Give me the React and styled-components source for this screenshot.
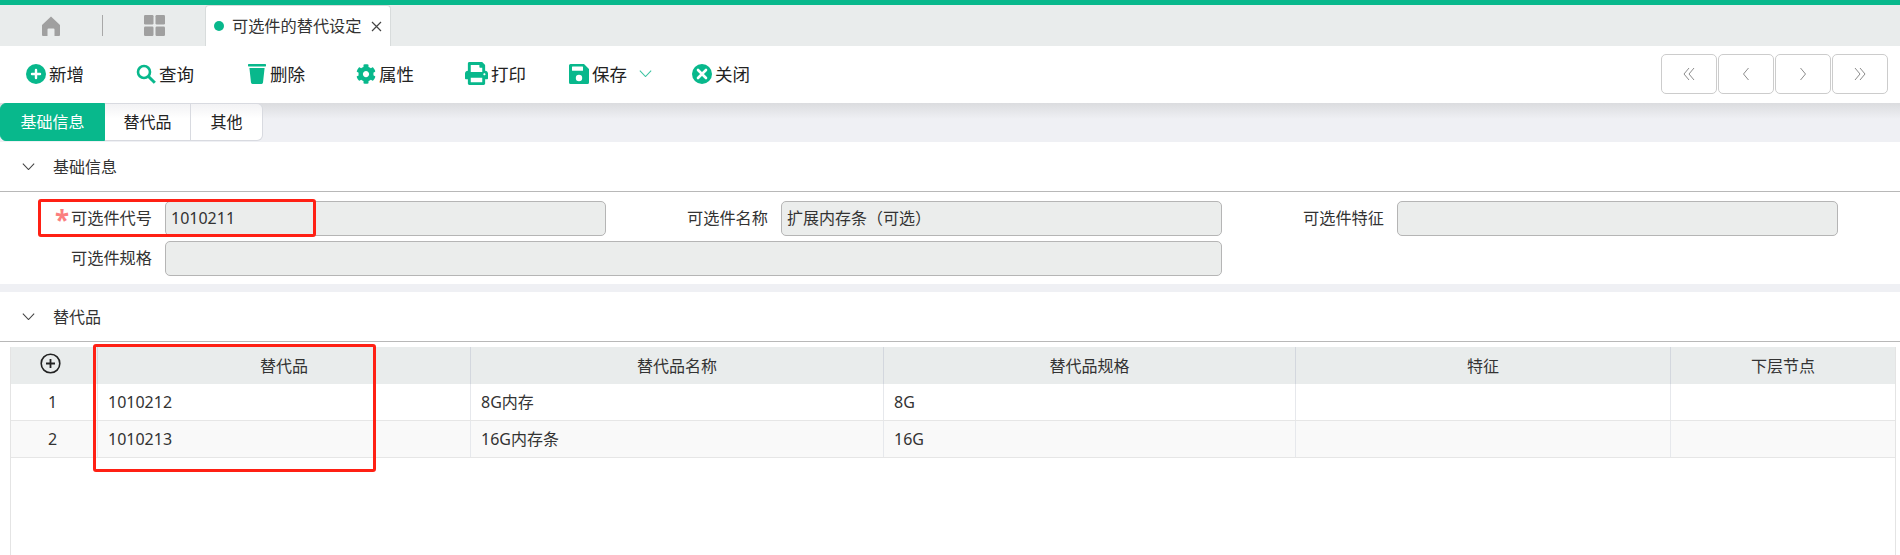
import React from 'react';
import styled, { createGlobalStyle } from 'styled-components';
import { FaCog, FaPrint } from 'react-icons/fa';

const GlobalStyle = createGlobalStyle`
  html, body {
    margin: 0;
    padding: 0;
    height: 100%;
    overflow: hidden;
    background: #fff;
  }
  * {
    box-sizing: border-box;
  }
`;

const green = '#08b88c';

const Page = styled.div`
  position: relative;
  width: 1900px;
  height: 555px;
  overflow: hidden;
  background: #fff;
  color: #222;
  font-family: "Noto Sans", "Noto Sans CJK SC", sans-serif;
  font-size: 16px;
  line-height: 22px;
  border-top: 5px solid ${green};
`;

const TabBar = styled.div`
  display: flex;
  height: 41px;
  background: #e9ecec;
`;

const TabIcon = styled.div`
  width: 102px;
  display: flex;
  align-items: center;
  justify-content: center;
  color: #a0a0a0;
`;

const TabDivider = styled.div`
  width: 1px;
  height: 21px;
  margin-top: 10px;
  background: #a8a8a8;
`;

const ActiveTab = styled.div`
  display: flex;
  align-items: center;
  width: 186px;
  height: 41px;
  padding-left: 8px;
  background: #fff;
  border: 1px solid #d8dcdc;
  border-bottom: none;
  border-radius: 4px 4px 0 0;
  color: #333;
  font-size: 16.2px;
`;

const TabDot = styled.span`
  width: 10px;
  height: 10px;
  border-radius: 50%;
  background: ${green};
  margin-right: 8px;
`;

const TabClose = styled.span`
  display: flex;
  margin-left: 9px;
  color: #444;
`;

const Toolbar = styled.div`
  display: flex;
  align-items: center;
  height: 57px;
  padding: 0 0 2px 26px;
  background: #fff;
`;

const ToolButton = styled.div`
  display: flex;
  align-items: center;
  width: ${(p) => p.$width}px;
  font-size: 17.5px;
  color: #222;
  svg {
    color: ${green};
  }
`;

const ToolIcon = styled.span`
  display: flex;
  justify-content: center;
  width: ${(p) => p.$width || 20}px;
  margin-right: 3px;
`;

const MenuArrow = styled.span`
  display: flex;
  margin-left: 12px;
`;

const Pager = styled.div`
  display: flex;
  gap: 1px;
  margin-left: auto;
  margin-right: 12px;
`;

const PagerButton = styled.div`
  display: flex;
  align-items: center;
  justify-content: center;
  width: 56px;
  height: 40px;
  border: 1px solid #ccc;
  border-radius: 5px;
  color: #8c8c8c;
`;

const SubTabStrip = styled.div`
  display: flex;
  height: 39px;
  background: linear-gradient(#dbdcdf 0, #eff0f4 16px, #eff0f4 100%);
`;

const SubTab = styled.div`
  display: flex;
  align-items: center;
  justify-content: center;
  width: ${(p) => p.$width}px;
  height: 38px;
  background: ${(p) => (p.$active ? green : 'linear-gradient(#f2f2f4, #fff 40%)')};
  color: ${(p) => (p.$active ? '#fff' : '#222')};
  border: 1px solid ${(p) => (p.$active ? green : '#d8dae0')};
  border-left: ${(p) => (p.$active ? undefined : 'none')};
  border-radius: ${(p) => p.$radius};
`;

const SectionHeader = styled.div`
  display: flex;
  align-items: center;
  height: 50px;
  padding-left: 22px;
  border-bottom: 1px solid #b8b8b8;
  color: #333;
`;

const SectionTitle = styled.span`
  margin-left: 18px;
`;

const FormGrid = styled.div`
  display: grid;
  grid-template-columns: repeat(3, 616px);
  row-gap: 5px;
  padding-top: 9px;
  padding-bottom: 8px;
`;

const Field = styled.div`
  display: grid;
  grid-template-columns: 152px 1fr;
  grid-column: span ${(p) => p.$span || 1};
  column-gap: 13px;
  align-items: center;
  padding-right: 10px;
`;

const FieldLabel = styled.label`
  display: flex;
  align-items: center;
  justify-content: flex-end;
  padding-bottom: 1px;
  color: #333;
  font-size: 16.2px;
`;

const Required = styled.span`
  color: #fb7f7f;
  font-size: 26px;
  font-weight: 700;
  line-height: 20px;
  height: 20px;
  margin: 4px 2px 0 0;
`;

const ValueBox = styled.div`
  height: 35px;
  line-height: 32px;
  padding-left: 5px;
  background: #ebedec;
  border: 1px solid #b5b5b5;
  border-radius: 5px;
  color: #333;
`;

const Band = styled.div`
  height: 8px;
  background: #eff0f4;
`;

const TableWrap = styled.div`
  margin: 5px 4px 0 10px;
  height: 220px;
  border-left: 1px solid #e4e4e4;
  border-right: 1px solid #e4e4e4;
`;

const columns = '87px 373px 413px 412px 375px 224px';

const Row = styled.div`
  display: grid;
  grid-template-columns: ${columns};
  height: 37px;
  background: ${(p) => (p.$header ? '#e9ecec' : p.$striped ? '#f9f9f9' : '#fff')};
  border-bottom: ${(p) => (p.$header ? 'none' : '1px solid #e6e6e6')};
`;

const HeadCell = styled.div`
  display: flex;
  align-items: center;
  justify-content: center;
  border-right: 1px solid #d3d7de;
  color: #333;
  &:last-child {
    border-right: none;
  }
`;

const AddRow = styled.span`
  display: flex;
  margin: 0 7px 5px 0;
`;

const Cell = styled.div`
  display: flex;
  align-items: center;
  justify-content: ${(p) => (p.$center ? 'center' : 'flex-start')};
  padding: ${(p) => (p.$center ? '0 3px 0 0' : '0 0 0 10px')};
  border-right: 1px solid #e6e8ec;
  color: #333;
  &:last-child {
    border-right: none;
  }
`;

const Callout = styled.div`
  position: absolute;
  border: 3px solid #ff2014;
  border-radius: 3px;
  pointer-events: none;
`;

const CodeCallout = styled(Callout)`
  left: 38px;
  top: 194px;
  width: 278px;
  height: 38px;
`;

const ColumnCallout = styled(Callout)`
  left: 93px;
  top: 339px;
  width: 283px;
  height: 128px;
`;

const HomeIcon = () => (
  <svg width="20" height="20" viewBox="0 0 20 20" fill="currentColor">
    <path d="M10 .5 19 9v10a1 1 0 0 1-1 1h-4.5v-6.5a1 1 0 0 0-1-1h-5a1 1 0 0 0-1 1V20H2a1 1 0 0 1-1-1V9z" />
  </svg>
);

const GridIcon = () => (
  <svg width="21" height="21" viewBox="0 0 21 21" fill="currentColor">
    <rect x="0" y="0" width="9.5" height="9.5" rx="1.2" />
    <rect x="11.5" y="0" width="9.5" height="9.5" rx="1.2" />
    <rect x="0" y="11.5" width="9.5" height="9.5" rx="1.2" />
    <rect x="11.5" y="11.5" width="9.5" height="9.5" rx="1.2" />
  </svg>
);

const CloseGlyph = () => (
  <svg width="11" height="11" viewBox="0 0 11 11" stroke="currentColor" strokeWidth="1.2" fill="none">
    <path d="M1 1l9 9M10 1l-9 9" />
  </svg>
);

const PlusCircle = () => (
  <svg width="20" height="20" viewBox="0 0 20 20">
    <circle cx="10" cy="10" r="10" fill="currentColor" />
    <path d="M10 6v8M6 10h8" stroke="#fff" strokeWidth="2.4" strokeLinecap="round" />
  </svg>
);

const SearchIcon = () => (
  <svg width="20" height="20" viewBox="0 0 20 20" fill="none" stroke="currentColor">
    <circle cx="8" cy="8" r="6" strokeWidth="2.6" />
    <path d="M12.5 12.5l6.3 6.3" strokeWidth="3" />
  </svg>
);

const TrashIcon = () => (
  <svg width="18" height="20" viewBox="0 0 18 20" fill="currentColor">
    <rect x="0" y="0" width="18" height="2.4" rx="0.6" />
    <path d="M1.4 4h15.2l-1.6 14.6a1.5 1.5 0 0 1-1.5 1.4H4.5A1.5 1.5 0 0 1 3 18.6z" />
  </svg>
);

const SaveIcon = () => (
  <svg width="20" height="20" viewBox="0 0 20 20" fill="currentColor">
    <path d="M1.5 0H15l5 5v13.5a1.5 1.5 0 0 1-1.5 1.5h-17A1.5 1.5 0 0 1 0 18.5v-17A1.5 1.5 0 0 1 1.5 0z" />
    <rect x="3" y="2.5" width="11" height="4.2" rx="0.5" fill="#fff" />
    <circle cx="10" cy="14" r="3.2" fill="#fff" />
  </svg>
);

const CloseCircle = () => (
  <svg width="20" height="20" viewBox="0 0 20 20">
    <circle cx="10" cy="10" r="10" fill="currentColor" />
    <path d="M6 6l8 8M14 6l-8 8" stroke="#fff" strokeWidth="2.6" strokeLinecap="round" />
  </svg>
);

const Chevron = ({ size = 13, color = 'currentColor' }) => (
  <svg width={size} height={size * 0.6} viewBox="0 0 13 8" fill="none" stroke={color} strokeWidth="1.1" style={{ color }}>
    <path d="M.7.7l5.8 6 5.8-6" />
  </svg>
);

const PagerArrow = ({ d }) => (
  <svg width="12" height="14" viewBox="0 0 12 14" fill="none" stroke="currentColor" strokeWidth="1">
    <path d={d} />
  </svg>
);

const AddRowIcon = () => (
  <svg width="21" height="21" viewBox="0 0 21 21" fill="none" stroke="#222">
    <circle cx="10.5" cy="10.5" r="9.3" strokeWidth="1.6" />
    <path d="M10.5 6v9M6 10.5h9" strokeWidth="1.8" />
  </svg>
);

const tools = [
  { label: '新增', width: 110, icon: <PlusCircle /> },
  { label: '查询', width: 111, icon: <SearchIcon /> },
  { label: '删除', width: 109, icon: <TrashIcon /> },
  { label: '属性', width: 108, icon: <FaCog size={20} /> },
  { label: '打印', width: 105, iconWidth: 24, icon: <FaPrint size={23} /> },
  { label: '保存', width: 123, icon: <SaveIcon />, menu: true },
  { label: '关闭', width: 70, icon: <CloseCircle /> },
];

const pagerArrows = [
  'M6 1 1 7l5 6M11 1 6 7l5 6',
  'M8.5 1l-5 6 5 6',
  'M3.5 1l5 6-5 6',
  'M1 1l5 6-5 6M6 1l5 6-5 6',
];

const rows = [
  ['1', '1010212', '8G内存', '8G', '', ''],
  ['2', '1010213', '16G内存条', '16G', '', ''],
];

const App = () => {
  return (
    <Page>
      <GlobalStyle />
      <TabBar>
        <TabIcon>
          <HomeIcon />
        </TabIcon>
        <TabDivider />
        <TabIcon>
          <GridIcon />
        </TabIcon>
        <ActiveTab>
          <TabDot />
          可选件的替代设定
          <TabClose>
            <CloseGlyph />
          </TabClose>
        </ActiveTab>
      </TabBar>

      <Toolbar>
        {tools.map((tool) => (
          <ToolButton key={tool.label} $width={tool.width}>
            <ToolIcon $width={tool.iconWidth}>{tool.icon}</ToolIcon>
            {tool.label}
            {tool.menu && (
              <MenuArrow>
                <Chevron color="#3cc4a2" />
              </MenuArrow>
            )}
          </ToolButton>
        ))}
        <Pager>
          {pagerArrows.map((d) => (
            <PagerButton key={d}>
              <PagerArrow d={d} />
            </PagerButton>
          ))}
        </Pager>
      </Toolbar>

      <SubTabStrip>
        <SubTab $active $width={105} $radius="6px 0 0 6px">基础信息</SubTab>
        <SubTab $width={86} $radius="0">替代品</SubTab>
        <SubTab $width={72} $radius="0 6px 6px 0">其他</SubTab>
      </SubTabStrip>

      <SectionHeader>
        <Chevron color="#444" />
        <SectionTitle>基础信息</SectionTitle>
      </SectionHeader>
      <FormGrid>
        <Field>
          <FieldLabel><Required>*</Required>可选件代号</FieldLabel>
          <ValueBox>1010211</ValueBox>
        </Field>
        <Field>
          <FieldLabel>可选件名称</FieldLabel>
          <ValueBox>扩展内存条（可选）</ValueBox>
        </Field>
        <Field>
          <FieldLabel>可选件特征</FieldLabel>
          <ValueBox />
        </Field>
        <Field $span={2}>
          <FieldLabel>可选件规格</FieldLabel>
          <ValueBox />
        </Field>
      </FormGrid>
      <Band />

      <SectionHeader>
        <Chevron color="#444" />
        <SectionTitle>替代品</SectionTitle>
      </SectionHeader>
      <TableWrap>
        <Row $header>
          <HeadCell><AddRow><AddRowIcon /></AddRow></HeadCell>
          <HeadCell>替代品</HeadCell>
          <HeadCell>替代品名称</HeadCell>
          <HeadCell>替代品规格</HeadCell>
          <HeadCell>特征</HeadCell>
          <HeadCell>下层节点</HeadCell>
        </Row>
        {rows.map((row, rowIndex) => (
          <Row key={row[0]} $striped={rowIndex % 2 === 1}>
            {row.map((value, index) => (
              <Cell key={index} $center={index === 0}>{value}</Cell>
            ))}
          </Row>
        ))}
      </TableWrap>

      <CodeCallout />
      <ColumnCallout />
    </Page>
  );
};

export default App;
